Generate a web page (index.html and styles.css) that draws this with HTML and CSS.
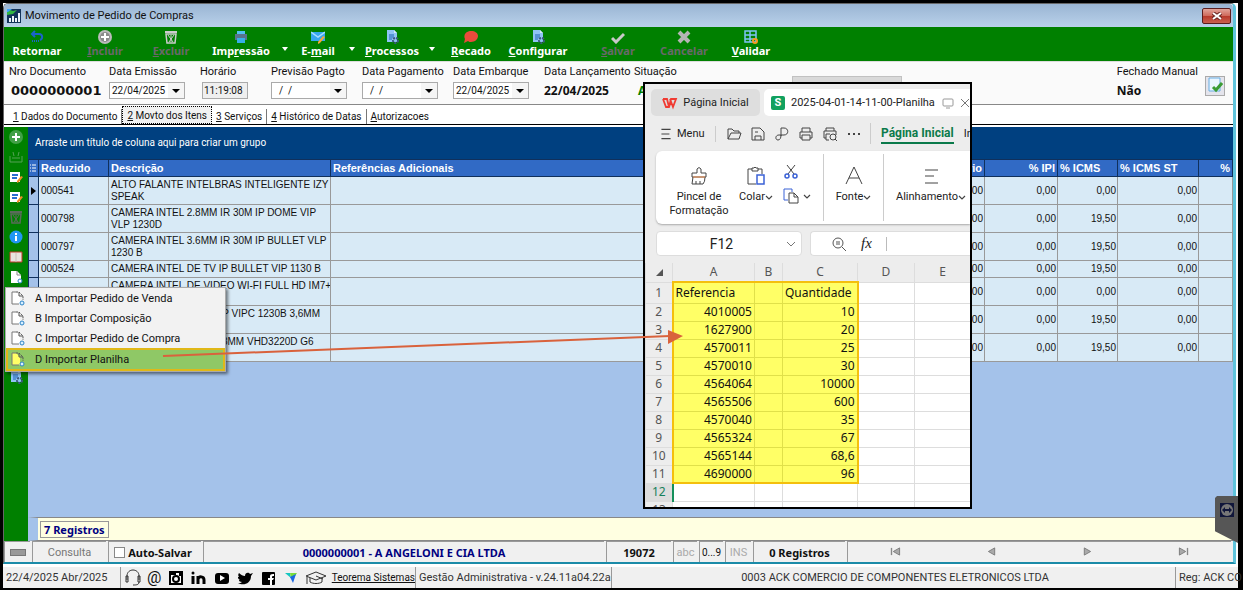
FILE: index.html
```
<!DOCTYPE html>
<html lang="pt-BR">
<head>
  <meta charset="UTF-8">
  <meta name="viewport" content="width=device-width, initial-scale=1.0">
  <title>Movimento de Pedido de Compras</title>
  <link rel="stylesheet" href="styles.css">
</head>
<body>
  <svg class="defs" aria-hidden="true">
    <symbol id="i-doc" viewBox="0 0 14 14"><path d="M2 0h7l3 3v9H2z" fill="#8fc4f5"/><path d="M9 0l3 3H9z" fill="#d5eafc"/><path d="M4 5h5M4 7h5M4 9h3" stroke="#1d62b5"/><circle cx="10.500" cy="10.500" r="2.500" fill="none" stroke="#3d5a80" stroke-width="2" stroke-dasharray="2 1"/></symbol>
    <symbol id="i-edit" viewBox="0 0 14 14"><path d="M1 2h10v10H1z" fill="#fff"/><path d="M3 5h6M3 8h5" stroke="#2a6ed0" stroke-width="2"/><path d="M8 11l4-5 2 1-4 5-2 1z" fill="#f08c2a"/></symbol>
    <symbol id="i-page" viewBox="0 0 14 14"><path d="M2 1h6l4 4v8H2z" fill="#fff"/><path d="M8 1v4h4" fill="none" stroke="#888"/><circle cx="11" cy="11" r="2" fill="#fff" stroke="#2b83c6"/></symbol>
    <symbol id="i-file" viewBox="0 0 14 15"><path d="M5 1H1v12h8V5z" fill="var(--paper, #fff)"/><path d="M5 1H1v12h7" fill="none" stroke="#777"/><path d="M5 1h3l4 4v4" fill="none" stroke="#555" stroke-dasharray="2 1"/><path d="M8 1v4h4" fill="none" stroke="#555"/><circle cx="11" cy="12" r="2" fill="#d8efff" stroke="#2b83c6"/></symbol>
    <symbol id="i-trash" viewBox="0 0 14 14"><path d="M1 1h12v2H1z" fill="currentColor"/><path d="M2 4h10l-1 9H3z" fill="none" stroke="currentColor" stroke-width="1.500"/><path d="M4 5l5 7M10 5l-5 7M7 5v7" stroke="currentColor"/></symbol>
    <symbol id="i-down" viewBox="0 0 8 8"><path d="M1 3l3 3 3-3" fill="none" stroke="#444" stroke-width="1.200"/></symbol>
  </svg>

  <div class="desktop">
    <main class="window">
      <header class="titlebar">
        <svg class="app-icon" viewBox="0 0 14 14"><path d="M0 0h14v14H0z" fill="#12335a"/><path d="M0 3l3-2 3 1 4-1-4 4-6 1z" fill="#30b640"/><path d="M0 0h5L1 3H0z" fill="#3ba4ff"/><path d="M2 13V9h2v4zM5 13V7h2v6zM8 13V9h2v4zM11 13V4h2v9z" fill="#eef4fa"/></svg>
        <h1>Movimento de Pedido de Compras</h1>
        <button class="close" aria-label="Fechar"><svg viewBox="0 0 10 8"><path d="M1 1l8 6M9 1L1 7" stroke="#6b2622" stroke-width="4"/><path d="M1 1l8 6M9 1L1 7" stroke="#fff" stroke-width="2"/></svg></button>
      </header>

      <nav class="toolbar">
        <button><svg viewBox="0 0 14 14"><path d="M5 1L2 4l3 3M2 4h7c4 0 4 5 1 6" fill="none" stroke="#1b63c9" stroke-width="2"/><path d="M2 11h8" stroke="#1b63c9" stroke-width="2" stroke-dasharray="1 1"/></svg>Retornar</button>
        <button class="off"><svg viewBox="0 0 14 14"><circle cx="7" cy="7" r="7" fill="#bbb"/><circle cx="7" cy="7" r="5" fill="#8b8b8b"/><path d="M7 3v8M3 7h8" stroke="#fff" stroke-width="2"/></svg><span><u>I</u>ncluir</span></button>
        <button class="off"><svg class="grey" viewBox="0 0 14 14"><use href="#i-trash"/></svg><span><u>E</u>xcluir</span></button>
        <button><svg viewBox="0 0 14 14"><path d="M3 1h8v4H3z" fill="#4fc0f0"/><path d="M1 4h12v6H1z" fill="#58738c"/><path d="M3 8h8v5H3z" fill="#38aee8"/></svg><span>Imp<u>r</u>essão</span></button>
        <button class="drop" aria-label="Opções de impressão"></button>
        <button><svg viewBox="0 0 14 14"><path d="M0 2h14v9H0z" fill="#35a7ee"/><path d="M0 2l7 5 7-5" fill="none" stroke="#a6dcff" stroke-width="1.500"/><path d="M7 12l5-6 2 1-5 6-2 1z" fill="#f5a83a"/></svg><span>E-<u>m</u>ail</span></button>
        <button class="drop" aria-label="Opções de e-mail"></button>
        <button><svg viewBox="0 0 14 14"><use href="#i-doc"/></svg><span><u>P</u>rocessos</span></button>
        <button class="drop" aria-label="Opções de processos"></button>
        <button><svg viewBox="0 0 14 14"><path d="M7 1c4 0 7 2 7 5s-3 6-7 6c-1 0-2 0-3-1l-4 2 1-4C-1 5 2 1 7 1z" fill="#ea4b3c"/></svg><span><u>R</u>ecado</span></button>
        <button><svg viewBox="0 0 14 14"><use href="#i-doc"/></svg><span><u>C</u>onfigurar</span></button>
        <span></span>
        <button class="off"><svg viewBox="0 0 14 14"><path d="M1 8l4 4 8-8" fill="none" stroke="#c9c9c9" stroke-width="3"/></svg><span><u>S</u>alvar</span></button>
        <button class="off"><svg viewBox="0 0 14 14"><path d="M2 2l10 10M12 2L2 12" stroke="#b5b5b5" stroke-width="4"/></svg><span>Cancelar</span></button>
        <button><svg viewBox="0 0 14 14"><path d="M1 1h11v11H1zM1 5h11M1 9h11M6 1v11" fill="none" stroke="#7fc4f8" stroke-width="1.500"/><circle cx="11" cy="11" r="2" fill="none" stroke="#f59a23" stroke-width="2"/></svg><span><u>V</u>alidar</span></button>
      </nav>

      <section class="form">
        <div class="field"><span>Nro Documento</span><strong class="doc">0000000001</strong></div>
        <div class="field"><label for="emissao">Data Emissão</label><div class="combo"><input id="emissao" value="22/04/2025"><button aria-label="Abrir calendário"></button></div></div>
        <div class="field"><label for="horario">Horário</label><input class="time" id="horario" value="11:19:08" readonly></div>
        <div class="field"><label for="previsao">Previsão Pagto</label><div class="combo"><input id="previsao" value="  /  /"><button aria-label="Abrir calendário"></button></div></div>
        <div class="field"><label for="pagamento">Data Pagamento</label><div class="combo"><input id="pagamento" value="  /  /"><button aria-label="Abrir calendário"></button></div></div>
        <div class="field"><label for="embarque">Data Embarque</label><div class="combo"><input id="embarque" value="22/04/2025"><button aria-label="Abrir calendário"></button></div></div>
        <div class="field"><span>Data Lançamento</span><strong>22/04/2025</strong></div>
        <div class="field"><span>Situação</span><strong class="status">Aberto</strong></div>
        <div class="field"><select class="model" aria-label="Modelo" disabled><option></option></select></div>
        <div class="field"><span>Fechado Manual</span><strong>Não</strong></div>
        <button class="check" aria-label="Alterar fechamento"><svg viewBox="0 0 16 16"><path d="M2 1h11v13H2z" fill="#eaf5ff" stroke="#69aee2"/><path d="M6 10l3 3 6-7" fill="none" stroke="#3b9b35" stroke-width="3"/></svg></button>
      </section>

      <nav class="tabs">
        <button><u>1</u> Dados do Documento</button>
        <button class="active"><u>2</u> Movto dos Itens</button>
        <button><u>3</u> Serviços</button>
        <button><u>4</u> Histórico de Datas</button>
        <button><u>A</u>utorizacoes</button>
      </nav>

      <div class="content">
        <aside class="sidebar">
          <button aria-label="Adicionar"><svg viewBox="0 0 14 14"><circle cx="7" cy="7" r="7" fill="#43a047"/><path d="M7 3v8M3 7h8" stroke="#fff" stroke-width="2"/></svg></button>
          <button aria-label="Receber"><svg viewBox="0 0 14 14"><path d="M1 6v6h12V6M4 2l1 4M10 2L9 6M3 8h8" fill="none" stroke="#55a055"/></svg></button>
          <button aria-label="Editar"><svg viewBox="0 0 14 14"><use href="#i-edit"/></svg></button>
          <button aria-label="Editar item"><svg viewBox="0 0 14 14"><use href="#i-edit"/></svg></button>
          <button aria-label="Excluir item"><svg class="dim" viewBox="0 0 14 14"><use href="#i-trash"/></svg></button>
          <button aria-label="Informações"><svg viewBox="0 0 14 14"><circle cx="7" cy="7" r="6.500" fill="#2196f3"/><path d="M7 3v2M7 6v5" stroke="#fff" stroke-width="2"/></svg></button>
          <button aria-label="Catálogo"><svg viewBox="0 0 14 14"><path d="M1 2h12v10H1z" fill="#e9e4df" stroke="#c0392b"/><path d="M7 3v9" stroke="#c9c0b8"/></svg></button>
          <button aria-label="Importar"><svg viewBox="0 0 14 14"><use href="#i-page"/></svg></button>
          <button class="last" aria-label="Configurar itens"><svg viewBox="0 0 14 14"><use href="#i-doc"/></svg></button>
        </aside>

        <section class="grid">
          <p class="group-bar">Arraste um título de coluna aqui para criar um grupo</p>
          <div class="grid-body">
            <table class="items">
              <colgroup><col class="c-mark"><col class="c-code"><col class="c-desc"><col><col class="c-unit"><col class="c-ipi"><col class="c-icms"><col class="c-st"><col class="c-last"></colgroup>
              <thead>
                <tr><th><svg viewBox="0 0 8 10"><path d="M1 2h1M1 5h1M1 8h1M3 2h4M3 5h4M3 8h4" stroke="#fff"/></svg></th><th>Reduzido</th><th>Descrição</th><th>Referências Adicionais</th><th class="num">Unitário</th><th class="num">% IPI</th><th>% ICMS</th><th>% ICMS ST</th><th class="num">%</th></tr>
              </thead>
              <tbody>
                <tr><td><svg viewBox="0 0 8 10"><path d="M2 1l5 4-5 4z"/></svg></td><td>000541</td><td>ALTO FALANTE INTELBRAS INTELIGENTE IZY<br>SPEAK</td><td></td><td class="num">0,00</td><td class="num">0,00</td><td class="num">0,00</td><td class="num">0,00</td><td></td></tr>
                <tr><td></td><td>000798</td><td>CAMERA INTEL 2.8MM IR 30M IP DOME VIP<br>VLP 1230D</td><td></td><td class="num">0,00</td><td class="num">0,00</td><td class="num">19,50</td><td class="num">0,00</td><td></td></tr>
                <tr><td></td><td>000797</td><td>CAMERA INTEL 3.6MM IR 30M IP BULLET VLP<br>1230 B</td><td></td><td class="num">0,00</td><td class="num">0,00</td><td class="num">19,50</td><td class="num">0,00</td><td></td></tr>
                <tr class="single"><td></td><td>000524</td><td>CAMERA INTEL DE TV IP BULLET VIP 1130 B</td><td></td><td class="num">0,00</td><td class="num">0,00</td><td class="num">19,50</td><td class="num">0,00</td><td></td></tr>
                <tr><td></td><td></td><td>CAMERA INTEL DE VIDEO WI-FI FULL HD IM7+<br>&nbsp;</td><td></td><td class="num">0,00</td><td class="num">0,00</td><td class="num">0,00</td><td class="num">0,00</td><td></td></tr>
                <tr><td></td><td></td><td>CAMERA INTEL DOME IP VIPC 1230B 3,6MM<br>&nbsp;</td><td></td><td class="num">0,00</td><td class="num">0,00</td><td class="num">19,50</td><td class="num">0,00</td><td></td></tr>
                <tr><td></td><td></td><td>CAMERA INTEL FULL 2,8MM VHD3220D G6<br>&nbsp;</td><td></td><td class="num">0,00</td><td class="num">0,00</td><td class="num">19,50</td><td class="num">0,00</td><td></td></tr>
              </tbody>
            </table>
          </div>
          <div class="summary"><span>7 Registros</span></div>
        </section>
      </div>

      <footer class="panel">
        <div class="cell"><i class="led"></i></div>
        <div class="cell muted">Consulta</div>
        <div class="cell"><label class="auto"><input type="checkbox"> Auto-Salvar</label></div>
        <div class="cell client">0000000001 - A ANGELONI E CIA LTDA</div>
        <div class="cell strong">19072</div>
        <div class="cell faint">abc</div>
        <div class="cell tight">0...9</div>
        <div class="cell faint">INS</div>
        <div class="cell strong">0 Registros</div>
        <div class="cell pager">
          <button aria-label="Primeiro"><svg viewBox="0 0 12 10"><path d="M1 1v8" stroke="#888" stroke-width="1.500"/><path d="M10 1v8L3 5z" fill="#aaa" stroke="#777"/></svg></button>
          <button aria-label="Anterior"><svg viewBox="0 0 12 10"><path d="M9 1v8L2 5z" fill="#aaa" stroke="#777"/></svg></button>
          <button aria-label="Próximo"><svg viewBox="0 0 12 10"><path d="M3 1v8l7-4z" fill="#aaa" stroke="#777"/></svg></button>
          <button aria-label="Último"><svg viewBox="0 0 12 10"><path d="M2 1v8l7-4z" fill="#aaa" stroke="#777"/><path d="M11 1v8" stroke="#888" stroke-width="1.500"/></svg></button>
        </div>
      </footer>
    </main>

    <footer class="statusbar">
      <div>22/4/2025 Abr/2025</div>
      <div class="links">
        <a href="#" aria-label="Suporte"><svg viewBox="0 0 18 18"><path d="M3 11V7c0-8 12-8 12 0v4M2 7h2v6H2zM14 7h2v6h-2zM15 13c0 3-3 3-6 3" fill="none" stroke="#333"/></svg></a>
        <a class="at" href="#">@</a>
        <a href="#" aria-label="Instagram"><svg viewBox="0 0 18 18"><path d="M3 3h12v12H3z" fill="#fff" stroke="#000" stroke-width="2"/><path d="M3 5h6M13 4v3" stroke="#000" stroke-width="2"/><circle cx="9" cy="10" r="3" fill="#fff" stroke="#000" stroke-width="2"/></svg></a>
        <a href="#" aria-label="LinkedIn"><svg viewBox="0 0 18 18"><path d="M3 7v8M8 15V7M8 10c1-3 6-3 6 1v4" fill="none" stroke="#000" stroke-width="3"/><circle cx="3" cy="4" r="1.500"/></svg></a>
        <a href="#" aria-label="YouTube"><svg viewBox="0 0 18 18"><rect x="2" y="4" width="14" height="11" rx="3"/><path d="M7 6l5 3-5 3z" fill="#fff"/></svg></a>
        <a href="#" aria-label="Twitter"><svg viewBox="0 0 18 18"><path d="M3 4c2 2 4 3 6 3 0-4 4-4 5-2l3-1-2 3c0 8-8 10-13 7 2 0 3 0 4-1-2 0-3-1-3-2h1C2 10 2 9 2 8h1C2 7 2 5 3 4z"/></svg></a>
        <a href="#" aria-label="Facebook"><svg viewBox="0 0 18 18"><rect x="3" y="3" width="13" height="13" rx="1"/><path d="M11 16v-5H9V9h2V7q0-2 3-2h1v2h-1q-1 0-1 1v1h2l-1 2h-1v5z" fill="#fff"/></svg></a>
        <a href="#" aria-label="Teorema"><svg viewBox="0 0 18 18"><path d="M3 4h5l1 5z" fill="#15c6c0"/><path d="M8 4h7l-2 3-4 2z" fill="#7bdd38"/><path d="M8 8l6-3-3 9z" fill="#1b67e0"/></svg></a>
        <a href="#" aria-label="Treinamento"><svg class="cap" viewBox="0 0 22 18"><path d="M1 7l10-4 10 4-10 4zM5 9v4c3 2 9 2 12 0V9M2 8v7M11 7l7 3" fill="none" stroke="#333"/></svg></a>
        <a class="site" href="#">Teorema Sistemas</a>
      </div>
      <div>Gestão Administrativa - v.24.11a04.22a</div>
      <div class="company">0003 ACK COMERCIO DE COMPONENTES ELETRONICOS LTDA</div>
      <div>Reg: ACK CO</div>
    </footer>
  </div>

  <!-- import menu opened from the sidebar -->
  <div class="menu" role="menu">
    <button role="menuitem"><svg viewBox="0 0 14 15"><use href="#i-file"/></svg>A Importar Pedido de Venda</button>
    <button role="menuitem"><svg viewBox="0 0 14 15"><use href="#i-file"/></svg>B Importar Composição</button>
    <button role="menuitem"><svg viewBox="0 0 14 15"><use href="#i-file"/></svg>C Importar Pedido de Compra</button>
    <button class="selected" role="menuitem"><svg viewBox="0 0 14 15"><use href="#i-file"/></svg>D Importar Planilha</button>
  </div>

  <!-- spreadsheet window -->
  <section class="sheet">
    <div class="sheet-tabs">
      <button class="home-tab"><svg viewBox="0 0 16 12"><path d="M1 2h4l2 8 2-8h5l-3 8-3-8M1 2l3 8h3l2-6" fill="none" stroke="#f03b32" stroke-width="1.800"/></svg>Página Inicial</button>
      <div class="file-tab"><b>S</b><span>2025-04-01-14-11-00-Planilha a</span><svg viewBox="0 0 12 12"><rect x="1" y="2" width="10" height="7" rx="1" fill="none" stroke="#999"/><path d="M4 11h4" stroke="#999"/></svg><button aria-label="Fechar aba"><svg viewBox="0 0 10 10"><path d="M1 1l8 8M9 1L1 9" stroke="#777"/></svg></button></div>
    </div>
    <div class="sheet-menu">
      <button class="main-menu"><svg viewBox="0 0 14 14"><path d="M3 3h8M3 7h7M3 11h8" stroke="#444"/></svg>Menu</button>
      <button class="quick" aria-label="Abrir"><svg viewBox="0 0 16 16"><path d="M2 13V3h4l2 2h5v2M2 13l3-6h10l-2 6z" fill="none" stroke="#444"/></svg></button>
      <button class="quick" aria-label="Salvar"><svg viewBox="0 0 16 16"><path d="M2 2h8l4 4v8H2zM5 14v-4h6v4M5 6h3" fill="none" stroke="#444"/></svg></button>
      <button class="quick" aria-label="Exportar PDF"><svg viewBox="0 0 16 16"><path d="M7 10V2h3c5 0 5 7 0 7H5c-4 0-4 5-1 5 2 0 3-2 3-5" fill="none" stroke="#444"/></svg></button>
      <button class="quick" aria-label="Imprimir"><svg viewBox="0 0 16 16"><path d="M4 6V2h8v4M4 12H2V6h12v6h-2M4 9h8v5H4z" fill="none" stroke="#444"/></svg></button>
      <button class="quick" aria-label="Visualizar"><svg viewBox="0 0 16 16"><path d="M4 5V2h8v3M4 12H2V5h12v4M7 14H4V8h4" fill="none" stroke="#444"/><circle cx="11" cy="11" r="3" fill="none" stroke="#444"/><path d="M13 13l2 2" stroke="#444"/></svg></button>
      <button class="quick" aria-label="Mais"><svg viewBox="0 0 16 16"><path d="M2 8h2M7 8h2M12 8h2" stroke="#444" stroke-width="2"/></svg></button>
      <button class="ribbon-tab"><span>Página Inicial</span></button>
      <button class="next-tab">Inserir</button>
    </div>
    <div class="ribbon">
      <button class="tool brush"><svg viewBox="0 0 20 20"><path d="M8 7V3q2-3 4 0v4h5v4H3V7zM4 11l-1 7h11q2-2 2-7M7 15v3M11 15v3" fill="none" stroke="#444"/><path d="M4 11h12" stroke="#ec8a4a"/></svg>Pincel de<br>Formatação</button>
      <button class="tool paste"><svg viewBox="0 0 20 20"><path d="M6 3H2v15h8M12 3h4v5M6 5V2h2q1-2 2 0h2v3z" fill="none" stroke="#444"/><path d="M11 9h7v9h-7z" fill="#fff" stroke="#3b62d6" stroke-width="1.500"/></svg><span>Colar<svg class="down"><use href="#i-down"/></svg></span></button>
      <div class="clip">
        <button aria-label="Recortar"><svg viewBox="0 0 16 16"><path d="M4 1l7 9M12 1L5 10" stroke="#444"/><circle cx="4" cy="12" r="2" fill="none" stroke="#3b62d6" stroke-width="1.500"/><circle cx="12" cy="12" r="2" fill="none" stroke="#3b62d6" stroke-width="1.500"/></svg></button>
        <button aria-label="Copiar"><svg viewBox="0 0 16 16"><path d="M5 12H1V1h8v3" fill="none" stroke="#3b62d6"/><path d="M6 5h5l4 4v6H6zM11 5v4h4" fill="#fff" stroke="#444"/></svg><svg class="down"><use href="#i-down"/></svg></button>
      </div>
      <button class="tool font"><svg viewBox="0 0 20 20"><path d="M2 18l8-17 8 17M5 12h10" fill="none" stroke="#444"/></svg><span>Fonte<svg class="down"><use href="#i-down"/></svg></span></button>
      <button class="tool align"><svg viewBox="0 0 20 20"><path d="M4 4h13M4 10h9M4 17h13" stroke="#444"/></svg><span>Alinhamento<svg class="down"><use href="#i-down"/></svg></span></button>
    </div>
    <div class="formula">
      <div class="cell-name"><input value="F12" aria-label="Célula"><svg viewBox="0 0 10 8"><path d="M1 2l4 4 4-4" fill="none" stroke="#777"/></svg></div>
      <div class="fx"><svg viewBox="0 0 16 16"><circle cx="7" cy="7" r="5" fill="none" stroke="#555"/><path d="M11 11l4 4M5 6h4M5 8h4" stroke="#555"/></svg><em>fx</em><input aria-label="Fórmula"></div>
    </div>
    <table class="cells">
      <colgroup><col class="s-row"><col class="s-a"><col class="s-b"><col class="s-c"><col class="s-d"><col></colgroup>
      <thead><tr><th><i class="corner"></i></th><th>A</th><th>B</th><th>C</th><th>D</th><th>E</th></tr></thead>
      <tbody>
        <tr><th>1</th><td class="text">Referencia</td><td></td><td class="text">Quantidade</td><td></td><td></td></tr>
        <tr><th>2</th><td>4010005</td><td></td><td>10</td><td></td><td></td></tr>
        <tr><th>3</th><td>1627900</td><td></td><td>20</td><td></td><td></td></tr>
        <tr><th>4</th><td>4570011</td><td></td><td>25</td><td></td><td></td></tr>
        <tr><th>5</th><td>4570010</td><td></td><td>30</td><td></td><td></td></tr>
        <tr><th>6</th><td>4564064</td><td></td><td>10000</td><td></td><td></td></tr>
        <tr><th>7</th><td>4565506</td><td></td><td>600</td><td></td><td></td></tr>
        <tr><th>8</th><td>4570040</td><td></td><td>35</td><td></td><td></td></tr>
        <tr><th>9</th><td>4565324</td><td></td><td>67</td><td></td><td></td></tr>
        <tr><th>10</th><td>4565144</td><td></td><td>68,6</td><td></td><td></td></tr>
        <tr><th>11</th><td>4690000</td><td></td><td>96</td><td></td><td></td></tr>
        <tr class="current"><th>12</th><td></td><td></td><td></td><td></td><td></td></tr>
        <tr><th>13</th><td></td><td></td><td></td><td></td><td></td></tr>
      </tbody>
    </table>
  </section>

  <svg class="pointer" viewBox="0 0 524 30" aria-hidden="true"><path d="M1 26L508 6" stroke="#d9623c" stroke-width="2"/><path d="M506 0l15 6-15 8z" fill="#d9623c"/></svg>

  <button class="remote" aria-label="Acesso remoto"><svg viewBox="0 0 16 16"><path d="M1 1h14v14H1z" fill="#10163a"/><circle cx="8" cy="8" r="6" fill="#777"/><path d="M3 8l3-3v2h4V5l3 3-3 3V9H6v2z" fill="#10163a"/></svg></button>
</body>
</html>
```
FILE: styles.css
```
* {
  box-sizing: border-box;
}

body {
  margin: 0;
  overflow: hidden;
  background: #000;
  font-family: Roboto, "Noto Sans", sans-serif;
  font-size: 11px;
  color: #111;
}

button {
  padding: 0;
  border: none;
  background: none;
  font: inherit;
  color: inherit;
}

input {
  min-width: 0;
  font: inherit;
  color: inherit;
}

.defs {
  display: none;
}

.desktop {
  display: flex;
  flex-direction: column;
  height: 100vh;
  border: solid #000;
  border-width: 3px 5px 2px 3px;
  background: #fff;
}

.window {
  flex: 1;
  display: flex;
  flex-direction: column;
  min-height: 0;
  margin-right: 2px;
  border: 1px solid #666;
  border-right: 3px solid #5fc4dc;
  border-bottom: 2px solid #1b8ba8;
  border-radius: 5px 5px 0 0;
  background: #fff;
}

/* title */
.titlebar {
  display: flex;
  align-items: center;
  gap: 4px;
  height: 23px;
  padding: 0 2px 0 3px;
  border-radius: 4px 4px 0 0;
  background: linear-gradient(#9ab5d3, #b9d1ea);
}

.titlebar h1 {
  flex: 1;
  margin: 0;
  font-size: 11px;
  font-weight: normal;
}

.app-icon {
  width: 14px;
  height: 14px;
}

.close {
  display: flex;
  align-items: center;
  justify-content: center;
  width: 29px;
  height: 16px;
  border: 1px solid #5b1d1d;
  border-radius: 2px;
  background: linear-gradient(#e2a49a 0%, #cf6a5c 48%, #b8392b 52%, #c9604f 100%);
}

.close svg {
  width: 10px;
  height: 8px;
}

/* green toolbar */
.toolbar {
  display: grid;
  grid-template-columns: 66px 70px 62px 78px 10px 56px 12px 68px 12px 66px 68px 12px 68px 64px 70px;
  height: 34px;
  background: #008000;
  color: #fff;
  font-family: "Noto Sans", sans-serif;
  font-size: 11px;
  font-weight: bold;
  line-height: 14px;
}

.toolbar button {
  display: flex;
  flex-direction: column;
  align-items: center;
  padding-top: 3px;
}

.toolbar svg {
  width: 14px;
  height: 14px;
}

.toolbar .off {
  color: #696969;
}

.toolbar .grey {
  color: #ccc;
}

.toolbar .drop {
  padding-top: 20px;
}

.toolbar .drop::before {
  content: "";
  border: 3px solid transparent;
  border-top: 4px solid #fff;
}

/* order header */
.form {
  display: grid;
  grid-template-columns: 100px 91px 71px 91px 91px 91px 90px 158px 110px 1fr 20px;
  height: 44px;
  padding: 3px 8px 0 5px;
  border-top: 1px solid #ddd;
  border-bottom: 1px solid #888;
  background: #fafafa;
}

.field {
  display: flex;
  flex-direction: column;
  gap: 3px;
  line-height: 14px;
}

.field:nth-child(10) {
  justify-self: end;
  padding-right: 7px;
}

.field strong {
  font-family: "Noto Sans", sans-serif;
  font-size: 12px;
  line-height: 17px;
}

.field .doc {
  padding-left: 2px;
  font-family: "DejaVu Sans", sans-serif;
  font-size: 13px;
}

.field .status {
  padding-left: 4px;
  color: #008000;
}

.combo {
  display: flex;
  width: 76px;
  height: 17px;
  border: 1px solid #aaa;
  background: #fff;
  font-size: 10px;
}

.combo input {
  flex: 1;
  padding: 0 2px;
  border: none;
  background: none;
}

.combo button {
  display: flex;
  align-items: center;
  justify-content: center;
  width: 16px;
  background: #f5f5f5;
}

.combo button::before {
  content: "";
  margin-top: 4px;
  border: 4px solid transparent;
  border-top-color: #000;
}

.time {
  width: 46px;
  height: 17px;
  margin-left: 2px;
  padding: 0 1px;
  border: 1px solid #aaa;
  background: #efefef;
  font-size: 10px;
}

.model {
  height: 20px;
  margin-top: 11px;
  border: 1px solid #aaa;
  background: #ccc;
}

.check {
  width: 20px;
  height: 20px;
  margin-top: 11px;
  border: 1px solid #aaa;
  background: #e4e4ec;
}

.check svg {
  width: 16px;
  height: 16px;
}

.tabs {
  display: flex;
  align-items: end;
  height: 20px;
  border-bottom: 1px solid #000;
  font-size: 10px;
  line-height: 15px;
}

.tabs button {
  padding: 0 4px;
  border-right: 1px solid #777;
}

.tabs button:first-child {
  padding-left: 9px;
}

.tabs button:last-child {
  border-right: none;
}

.tabs .active {
  height: 18px;
  border: 1px dotted #000;
  background: #f2f2f2;
}

/* items */
.content {
  flex: 1;
  display: flex;
  min-height: 0;
  padding-top: 2px;
}

.sidebar {
  display: flex;
  flex-direction: column;
  width: 24px;
  background: #008000;
}

.sidebar button {
  display: flex;
  align-items: center;
  justify-content: center;
  height: 20px;
}

.sidebar .last {
  margin-top: 80px;
}

.sidebar svg {
  width: 14px;
  height: 14px;
}

.sidebar .dim {
  color: #5a6b5a;
}

.grid {
  flex: 1;
  display: flex;
  flex-direction: column;
  min-width: 0;
}

.group-bar {
  height: 32px;
  margin: 0;
  padding-left: 7px;
  background: #004080;
  color: #fff;
  font-size: 10px;
  line-height: 32px;
}

.grid-body {
  flex: 1;
  overflow: hidden;
  background: #a4c2ea;
}

.items {
  width: 100%;
  table-layout: fixed;
  border-collapse: collapse;
  font-family: "Liberation Sans", Arial, sans-serif;
  font-size: 10px;
  line-height: 12px;
  white-space: nowrap;
}

.items th {
  height: 17px;
  padding: 0 2px;
  border: 1px solid #10305c;
  background: #316ac5;
  color: #fff;
  font-size: 11px;
  text-align: left;
}

.items td {
  height: 28px;
  padding: 0 1px 0 2px;
  border: 1px solid #999;
  background: #d8eaf6;
  overflow: hidden;
}

.items .single td {
  height: 17px;
}

.items .num {
  text-align: right;
}

.items td:first-child {
  border-color: #10305c;
  background: #a4c2ea;
}

.items tr > :first-child {
  padding: 0;
}

.items svg {
  display: block;
  width: 8px;
  height: 10px;
}

.c-mark { width: 10px; }
.c-code { width: 70px; }
.c-desc { width: 222px; }
.c-unit { width: 90px; }
.c-ipi { width: 73px; }
.c-icms { width: 60px; }
.c-st { width: 81px; }
.c-last { width: 34px; }

.summary {
  height: 24px;
  padding: 3px 2px;
  border-top: 1px solid #888;
  border-bottom: 1px solid #888;
  border-left: 10px solid #a4c2ea;
  background: #ffffe1;
}

.summary span {
  display: inline-block;
  padding: 0 3px;
  border: 1px solid #999;
  color: #000080;
  font-family: "Noto Sans", sans-serif;
  font-weight: bold;
  line-height: 15px;
}

/* bottom panel */
.panel {
  display: grid;
  grid-template-columns: 28px 76px 95px 1fr 67px 26px 26px 28px 94px 386px;
  height: 21px;
  background: #f0f0f0;
}

.cell {
  display: flex;
  align-items: center;
  justify-content: center;
  margin-right: 2px;
  border-top: 1px solid #999;
  border-left: 1px solid #999;
}

.led {
  width: 16px;
  height: 7px;
  border: 1px solid #777;
  background: #999;
}

.muted {
  color: #777;
}

.faint {
  color: #aaa;
}

.tight {
  font-size: 10px;
}

.strong,
.client,
.auto {
  font-family: "Noto Sans", sans-serif;
  font-weight: bold;
}

.client {
  color: #000080;
}

.auto {
  display: flex;
  align-items: center;
  gap: 3px;
  padding-right: 4px;
}

.auto input {
  appearance: none;
  width: 11px;
  height: 11px;
  margin: 0;
  border: 1px solid #888;
  background: #fff;
}

.pager {
  display: grid;
  grid-template-columns: repeat(4, 1fr);
}

.pager svg {
  width: 12px;
  height: 9px;
}

/* main status bar */
.statusbar {
  display: grid;
  grid-template-columns: 118px 295px 196px 1fr 62px;
  height: 24px;
  border-top: 3px solid #fff;
  background: #f0f0f0;
  color: #333;
  line-height: 21px;
  white-space: nowrap;
}

.statusbar > div {
  padding-left: 3px;
  border-right: 1px solid #999;
}

.statusbar > div:last-child {
  border-right: none;
}

.statusbar .company {
  text-align: center;
}

.links {
  display: flex;
  align-items: center;
  gap: 5px;
}

.links a {
  color: #111;
}

.links svg {
  display: block;
  width: 18px;
  height: 18px;
}

.links .cap {
  width: 22px;
}

.links .at {
  width: 17px;
  font-size: 16px;
  text-decoration: none;
}

.links .site {
  font-size: 10px;
}

/* popup menu */
.menu {
  position: absolute;
  left: 5px;
  top: 287px;
  width: 221px;
  border: 1px solid #aaa;
  background: #f2f2f2;
  box-shadow: 2px 2px 3px rgba(0, 0, 0, 0.5);
}

.menu button {
  display: flex;
  align-items: center;
  gap: 10px;
  width: 100%;
  height: 20px;
  padding-left: 5px;
}

.menu svg {
  width: 14px;
  height: 15px;
}

.menu .selected {
  --paper: #ffff66;
  height: 23px;
  padding-left: 3px;
  border: 2px solid #e0b818;
  background: #8fc866;
}

/* spreadsheet */
.sheet {
  position: absolute;
  left: 643px;
  top: 82px;
  width: 329px;
  height: 427px;
  border: 2px solid #000;
  background: #ededed;
  overflow: hidden;
  color: #222;
}

.sheet svg {
  flex: none;
  width: 16px;
  height: 16px;
}

.sheet .down {
  width: 8px;
  height: 8px;
}

.sheet-tabs {
  display: flex;
  gap: 4px;
  height: 32px;
  padding: 5px 0 0 6px;
}

.home-tab {
  display: flex;
  align-items: center;
  justify-content: center;
  gap: 5px;
  width: 109px;
  border-radius: 5px;
  background: #dedede;
}

.file-tab {
  flex: 1;
  display: flex;
  align-items: center;
  gap: 6px;
  min-width: 0;
  padding-left: 7px;
  border-radius: 5px 0 0 5px;
  background: #fff;
}

.file-tab b {
  flex: none;
  width: 14px;
  height: 14px;
  border-radius: 2px;
  background: #12a15f;
  color: #fff;
  line-height: 14px;
  text-align: center;
}

.file-tab span {
  width: 146px;
  overflow: hidden;
  white-space: nowrap;
}

.file-tab svg {
  width: 12px;
  height: 12px;
}

.file-tab button {
  display: flex;
}

.file-tab button svg {
  width: 10px;
  height: 10px;
}

.sheet-menu {
  display: flex;
  align-items: center;
  height: 35px;
  padding-left: 13px;
}

.sheet-menu button {
  flex: none;
}

.main-menu {
  display: flex;
  align-items: center;
  gap: 3px;
  width: 58px;
  height: 16px;
  margin-right: 6px;
  border-right: 1px solid #ccc;
}

.quick {
  display: flex;
  justify-content: center;
  width: 24px;
}

.ribbon-tab {
  margin-left: 4px;
  padding: 0 10px;
  border-left: 1px solid #ccc;
  color: #0b7a4b;
  font-size: 12px;
  font-weight: bold;
  white-space: nowrap;
}

.ribbon-tab span {
  display: block;
  padding: 3px 0 2px;
  border-bottom: 2px solid #0b7a4b;
}

.ribbon {
  display: flex;
  height: 73px;
  margin-left: 11px;
  border-radius: 6px 0 0 6px;
  background: #fff;
  box-shadow: 0 1px 2px #aaa;
}

.tool {
  display: flex;
  flex: none;
  flex-direction: column;
  align-items: center;
  margin: 3px 0;
  padding-top: 12px;
  line-height: 14px;
}

.ribbon .tool > svg {
  width: 20px;
  height: 20px;
  margin-bottom: 4px;
}

.brush { width: 86px; }
.paste { width: 28px; }

.font {
  width: 60px;
  border-left: 1px solid #ccc;
}

.align {
  width: 95px;
  border-left: 1px solid #ccc;
}

.tool span {
  display: flex;
  align-items: center;
}

.clip {
  display: flex;
  flex: none;
  flex-direction: column;
  gap: 8px;
  width: 53px;
  padding: 13px 0 0 13px;
}

.clip button {
  display: flex;
  align-items: center;
  gap: 4px;
}

.formula {
  display: flex;
  gap: 8px;
  height: 39px;
  padding: 7px 0 7px 11px;
}

.cell-name {
  display: flex;
  align-items: center;
  width: 146px;
  padding-right: 5px;
  border: 1px solid #ddd;
  border-radius: 4px;
  background: #fff;
}

.cell-name input {
  flex: 1;
  border: none;
  background: none;
  font-size: 14px;
  text-align: center;
}

.sheet .cell-name svg {
  width: 10px;
  height: 8px;
}

.fx {
  flex: 1;
  display: flex;
  align-items: center;
  gap: 14px;
  min-width: 0;
  padding-left: 20px;
  border: 1px solid #ddd;
  border-right: none;
  border-radius: 4px 0 0 4px;
  background: #fff;
}

.fx em {
  font-family: "Liberation Serif", serif;
  font-size: 15px;
}

.fx input {
  flex: 1;
  height: 14px;
  border: none;
  border-left: 1px solid #bbb;
}

.cells {
  width: 326px;
  table-layout: fixed;
  border-collapse: collapse;
  font-family: "Noto Sans", sans-serif;
  font-size: 12px;
  line-height: 16px;
}

.cells th {
  height: 18px;
  padding: 0;
  border: 1px solid #ddd;
  background: #ededed;
  color: #555;
  font-weight: normal;
}

.cells thead th {
  height: 19px;
  border-top: none;
}

.cells tbody tr:first-child th {
  height: 21px;
}

.cells td {
  padding: 0 2px;
  border: 1px solid #ddd;
  background: #fff;
  color: #111;
  text-align: right;
}

.cells .text {
  text-align: left;
}

.corner {
  display: inline-block;
  border-left: 7px solid transparent;
  border-bottom: 7px solid #555;
}

/* marked range A1:C11 */
.cells tr:nth-child(-n+11) td:nth-child(-n+4) {
  border-color: #e0e04a;
  background: #ffff66;
}

.cells tr:nth-child(-n+11) td:nth-child(2) {
  border-left: 2px solid #f4bf0d;
}

.cells tr:nth-child(-n+11) td:nth-child(4) {
  border-right: 2px solid #f4bf0d;
}

.cells tbody tr:first-child td:nth-child(-n+4) {
  border-top: 2px solid #f4bf0d;
}

.cells tr:nth-child(11) td:nth-child(-n+4) {
  border-bottom: 2px solid #f4bf0d;
}

.cells .current th {
  border-right: 2px solid #15905b;
  background: #ddd;
  color: #15805b;
}

.s-row { width: 27px; }
.s-a { width: 82px; }
.s-b { width: 28px; }
.s-c { width: 75px; }
.s-d { width: 57px; }

.pointer {
  position: absolute;
  left: 162px;
  top: 330px;
  width: 524px;
  height: 30px;
}

.remote {
  position: absolute;
  right: 5px;
  top: 496px;
  width: 23px;
  height: 47px;
  padding-bottom: 16px;
  background: #565656;
  clip-path: polygon(2px 0, 100% 0, 100% 100%, 0 75%, 0 2px);
}

.remote svg {
  width: 16px;
  height: 16px;
}
```
